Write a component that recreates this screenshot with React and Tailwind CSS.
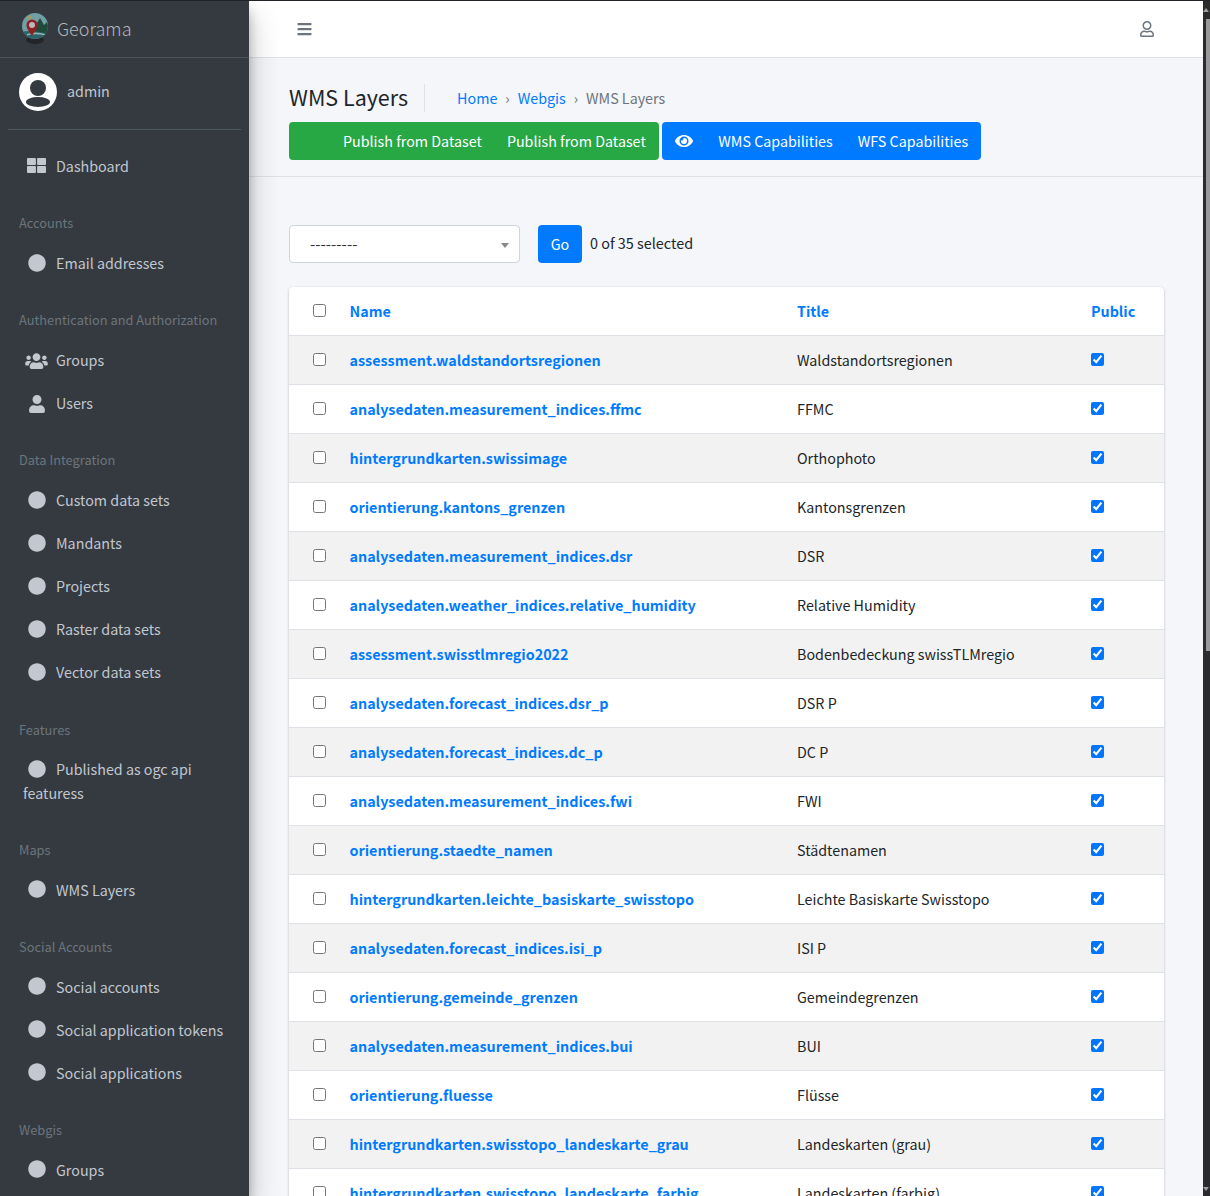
import React from "react";
import { FaBars, FaCircle, FaEye, FaRegUser, FaThLarge, FaUser, FaUsers } from "react-icons/fa";

const rows = [
  ["assessment.waldstandortsregionen", "Waldstandortsregionen"],
  ["analysedaten.measurement_indices.ffmc", "FFMC"],
  ["hintergrundkarten.swissimage", "Orthophoto"],
  ["orientierung.kantons_grenzen", "Kantonsgrenzen"],
  ["analysedaten.measurement_indices.dsr", "DSR"],
  ["analysedaten.weather_indices.relative_humidity", "Relative Humidity"],
  ["assessment.swisstlmregio2022", "Bodenbedeckung swissTLMregio"],
  ["analysedaten.forecast_indices.dsr_p", "DSR P"],
  ["analysedaten.forecast_indices.dc_p", "DC P"],
  ["analysedaten.measurement_indices.fwi", "FWI"],
  ["orientierung.staedte_namen", "Städtenamen"],
  ["hintergrundkarten.leichte_basiskarte_swisstopo", "Leichte Basiskarte Swisstopo"],
  ["analysedaten.forecast_indices.isi_p", "ISI P"],
  ["orientierung.gemeinde_grenzen", "Gemeindegrenzen"],
  ["analysedaten.measurement_indices.bui", "BUI"],
  ["orientierung.fluesse", "Flüsse"],
  ["hintergrundkarten.swisstopo_landeskarte_grau", "Landeskarten (grau)"],
  ["hintergrundkarten.swisstopo_landeskarte_farbig", "Landeskarten (farbig)"],
];

const sections = [
  ["Accounts", ["Email addresses"]],
  ["Authentication and Authorization", ["Groups:users", "Users:user"]],
  ["Data Integration", ["Custom data sets", "Mandants", "Projects", "Raster data sets", "Vector data sets"]],
  ["Features", ["Published as ogc api featuress"]],
  ["Maps", ["WMS Layers"]],
  ["Social Accounts", ["Social accounts", "Social application tokens", "Social applications"]],
  ["Webgis", ["Groups"]],
];

function NavIcon({ kind }) {
  if (kind === "users") return <FaUsers className="absolute left-[25px] top-[13px] w-[23px] h-[18px] text-[#c2c7d0]" />;
  if (kind === "user") return <FaUser className="absolute left-[29px] top-[13px] w-[16px] h-[18px] text-[#c2c7d0]" />;
  if (kind === "dash") return <FaThLarge preserveAspectRatio="none" className="absolute left-[27px] top-[12px] w-[19px] h-[17px] text-[#c2c7d0]" />;
  return <FaCircle className="absolute left-[28px] top-[12px] w-[18px] h-[18px] text-[#c2c7d0]" />;
}

function NavItem({ label, kind, late }) {
  if (label.startsWith("Published")) {
    return (
      <div className="relative px-[23px] py-[9px] text-[14.3px] leading-[24px] text-[#c2c7d0]">
        <NavIcon />
        <div className="pl-[33px]">Published as ogc api</div>
        <div>featuress</div>
      </div>
    );
  }
  return (
    <div className={`relative h-[43px] pl-[56px] flex items-center text-[14.3px] leading-[24px] text-[#c2c7d0] ${late ? "pb-0" : "pb-[2px]"}`}>
      <NavIcon kind={kind} />
      <span>{label}</span>
    </div>
  );
}

function Logo() {
  return (
    <svg viewBox="0 0 28 32" className="w-[28px] h-[32px] shrink-0 opacity-80">
      <defs>
        <clipPath id="globe"><circle cx="14" cy="13" r="13" /></clipPath>
      </defs>
      <ellipse cx="14" cy="27" rx="9" ry="4" fill="#1f2124" />
      <circle cx="14" cy="13" r="13" fill="#7fb9bd" />
      <g clipPath="url(#globe)">
        <path d="M10 20 L19 5 L23 12 L26 9 L30 22 L10 24 Z" fill="#1d4f3d" />
        <path d="M0 19 Q10 16 28 21 L28 27 L0 27 Z" fill="#2b6e70" />
        <path d="M6 21 Q14 18 24 21 L24 22.5 Q14 20 6 22.5 Z" fill="#a9d6cf" />
      </g>
      <circle cx="8.5" cy="4.5" r="2" fill="#c9b26e" />
      <path d="M11 23 C8 18 5.5 15.5 5.5 12 A5.5 5.5 0 0 1 16.5 12 C16.5 15.5 13.5 18 11 23 Z" fill="#a5191f" />
      <circle cx="11" cy="12" r="3" fill="#d9d9d9" />
    </svg>
  );
}

function Sidebar() {
  return (
    <aside className="w-[249px] shrink-0 h-full bg-[#343a40] relative z-10 shadow-[0_14px_28px_rgba(0,0,0,0.25),0_10px_10px_rgba(0,0,0,0.22)] overflow-hidden">
      <div className="h-[57px] border-b border-[#4b545c] flex items-center pl-[21px] gap-[8px]">
        <Logo />
        <span className="text-[18px] font-light text-[#b5b7ba] -mt-[2px]">Georama</span>
      </div>
      <div className="mx-[8px] h-[72px] border-b border-[#4f5962] flex items-center pl-[11px] pb-[4px] gap-[10px]">
        <svg viewBox="0 0 38 38" className="w-[38px] h-[38px] shrink-0">
          <circle cx="19" cy="19" r="19" fill="#ffffff" />
          <circle cx="19" cy="15" r="8" fill="#343a40" />
          <ellipse cx="19" cy="29" rx="12" ry="5" fill="#343a40" />
        </svg>
        <span className="text-[14.3px] text-[#c2c7d0] -mt-[2px]">admin</span>
      </div>
      <nav className="pt-[15px]">
        <NavItem label="Dashboard" kind="dash" />
        {sections.map(([title, items], s) => (
          <div key={title} className="mt-[17px]">
            <div className={`h-[37px] pl-[19px] flex items-center text-[12.8px] text-[#6c757d] ${s < 3 ? "pb-[2px]" : "pb-0"}`}>{title}</div>
            {items.map((it) => {
              const [label, kind] = it.split(":");
              return <NavItem key={it} label={label} kind={kind} late={s > 3} />;
            })}
          </div>
        ))}
      </nav>
    </aside>
  );
}

function Scrollbar() {
  return (
    <div className="w-[7px] shrink-0 h-full bg-[#2b2b2b] flex flex-col items-end pt-[7px] overflow-hidden">
      <div className="w-0 h-0 mr-[1px] border-l-[3px] border-r-[3px] border-b-[4px] border-l-transparent border-r-transparent border-b-[#a0a0a0]" />
      <div className="w-[4px] h-[632px] mt-[7px] bg-[#9a9a9a]" />
      <div className="w-0 h-0 mr-[1px] mt-[536px] border-l-[3px] border-r-[3px] border-t-[4px] border-l-transparent border-r-transparent border-t-[#a0a0a0]" />
    </div>
  );
}

function Table() {
  return (
    <div className="bg-white rounded-[4px] shadow-[0_0_1px_rgba(0,0,0,0.125),0_1px_3px_rgba(0,0,0,0.2)]">
      <table className="w-[875px] table-fixed border-collapse text-[14.3px] text-[#212529]">
        <colgroup>
          <col className="w-[49px]" />
          <col className="w-[447px]" />
          <col className="w-[294px]" />
          <col className="w-[85px]" />
        </colgroup>
        <thead>
          <tr className="h-[48px] border-b border-[#dee2e6] text-left font-bold text-[#007bff]">
            <th className="pl-[24px]"><input type="checkbox" className="block -mt-[1px]" /></th>
            <th className="pl-[11.5px] font-bold">Name</th>
            <th className="pl-[12px] font-bold">Title</th>
            <th className="pl-[12px] font-bold">Public</th>
          </tr>
        </thead>
        <tbody>
          {rows.map(([name, title], i) => (
            <tr key={name} className={`h-[49px] border-b border-[#dee2e6] ${i % 2 === 0 ? "bg-[#f2f2f2]" : "bg-white"}`}>
              <td className="pl-[24px]"><input type="checkbox" className="block -mt-[1px]" /></td>
              <td className="pl-[11.5px] font-bold text-[14.33px] text-[#007bff]">{name}</td>
              <td className="pl-[12px]">{title}</td>
              <td className="pl-[12px]"><input type="checkbox" defaultChecked className="block -mt-[1px]" /></td>
            </tr>
          ))}
        </tbody>
      </table>
    </div>
  );
}

function Main() {
  return (
    <main className="flex-1 min-w-0 h-full overflow-hidden bg-[#f4f6f9]">
      <header className="h-[57px] bg-white border-b border-[#dee2e6] flex items-center justify-between pl-[47.5px] pr-[49px]">
        <FaBars className="w-[15px] h-[16px] text-[#6c757d]" />
        <FaRegUser className="w-[14px] h-[16px] text-[#6c757d]" />
      </header>
      <section className="h-[119px] border-b border-[#dee2e6] pl-[40px] pt-[26px]">
        <div className="h-[28px] flex items-center">
          <h1 className="text-[21.5px] leading-[28px] text-[#212529] pr-[16px] border-r border-[#dee2e6] mr-[32px]"><span className="block -mt-[1px] mb-[1px]">WMS Layers</span></h1>
          <div className="flex items-center text-[14.3px] text-[#6c757d]">
            <span className="text-[#007bff]">Home</span>
            <span className="mx-[8px]">›</span>
            <span className="text-[#007bff]">Webgis</span>
            <span className="mx-[8px]">›</span>
            <span>WMS Layers</span>
          </div>
        </div>
        <div className="flex gap-[3px] mt-[10px] text-[14.3px] text-white">
          <div className="h-[38px] rounded-[4px] bg-[#28a745] flex items-center pl-[54px] pr-[13px] gap-[25px]">
            <span>Publish from Dataset</span>
            <span>Publish from Dataset</span>
          </div>
          <div className="h-[38px] rounded-[4px] bg-[#007bff] flex items-center pl-[13.5px] pr-[12.5px] gap-[25px]">
            <FaEye className="w-[18px] h-[16px]" />
            <span>WMS Capabilities</span>
            <span>WFS Capabilities</span>
          </div>
        </div>
      </section>
      <section className="pl-[40px] pr-[39px] pt-[48px]">
        <div className="flex items-center h-[38px] text-[14.3px] text-[#212529]">
          <div className="relative w-[231px] h-[38px] bg-white border border-[#ced4da] rounded-[4px] flex items-center pl-[20px]">
            <span className="text-[15.2px] text-[#333333] -mt-[2px]">---------</span>
            <span className="absolute right-[10px] top-[17px] w-0 h-0 border-l-[4px] border-r-[4px] border-t-[5px] border-l-transparent border-r-transparent border-t-[#888888]" />
          </div>
          <div className="ml-[18px] w-[44px] h-[38px] rounded-[4px] bg-[#007bff] text-white flex items-center justify-center">Go</div>
          <span className="ml-[8px] -mt-[3px] text-[14.4px]">0 of 35 selected</span>
        </div>
        <div className="mt-[24px]">
          <Table />
        </div>
      </section>
    </main>
  );
}

export default function App() {
  return (
    <div
      className="w-[1210px] h-[1196px] overflow-hidden flex border-t border-[#1f2227] bg-[#f4f6f9]"
      style={{ fontFamily: '"Noto Sans CJK SC", "Noto Sans", sans-serif' }}
    >
      <Sidebar />
      <Main />
      <Scrollbar />
    </div>
  );
}
